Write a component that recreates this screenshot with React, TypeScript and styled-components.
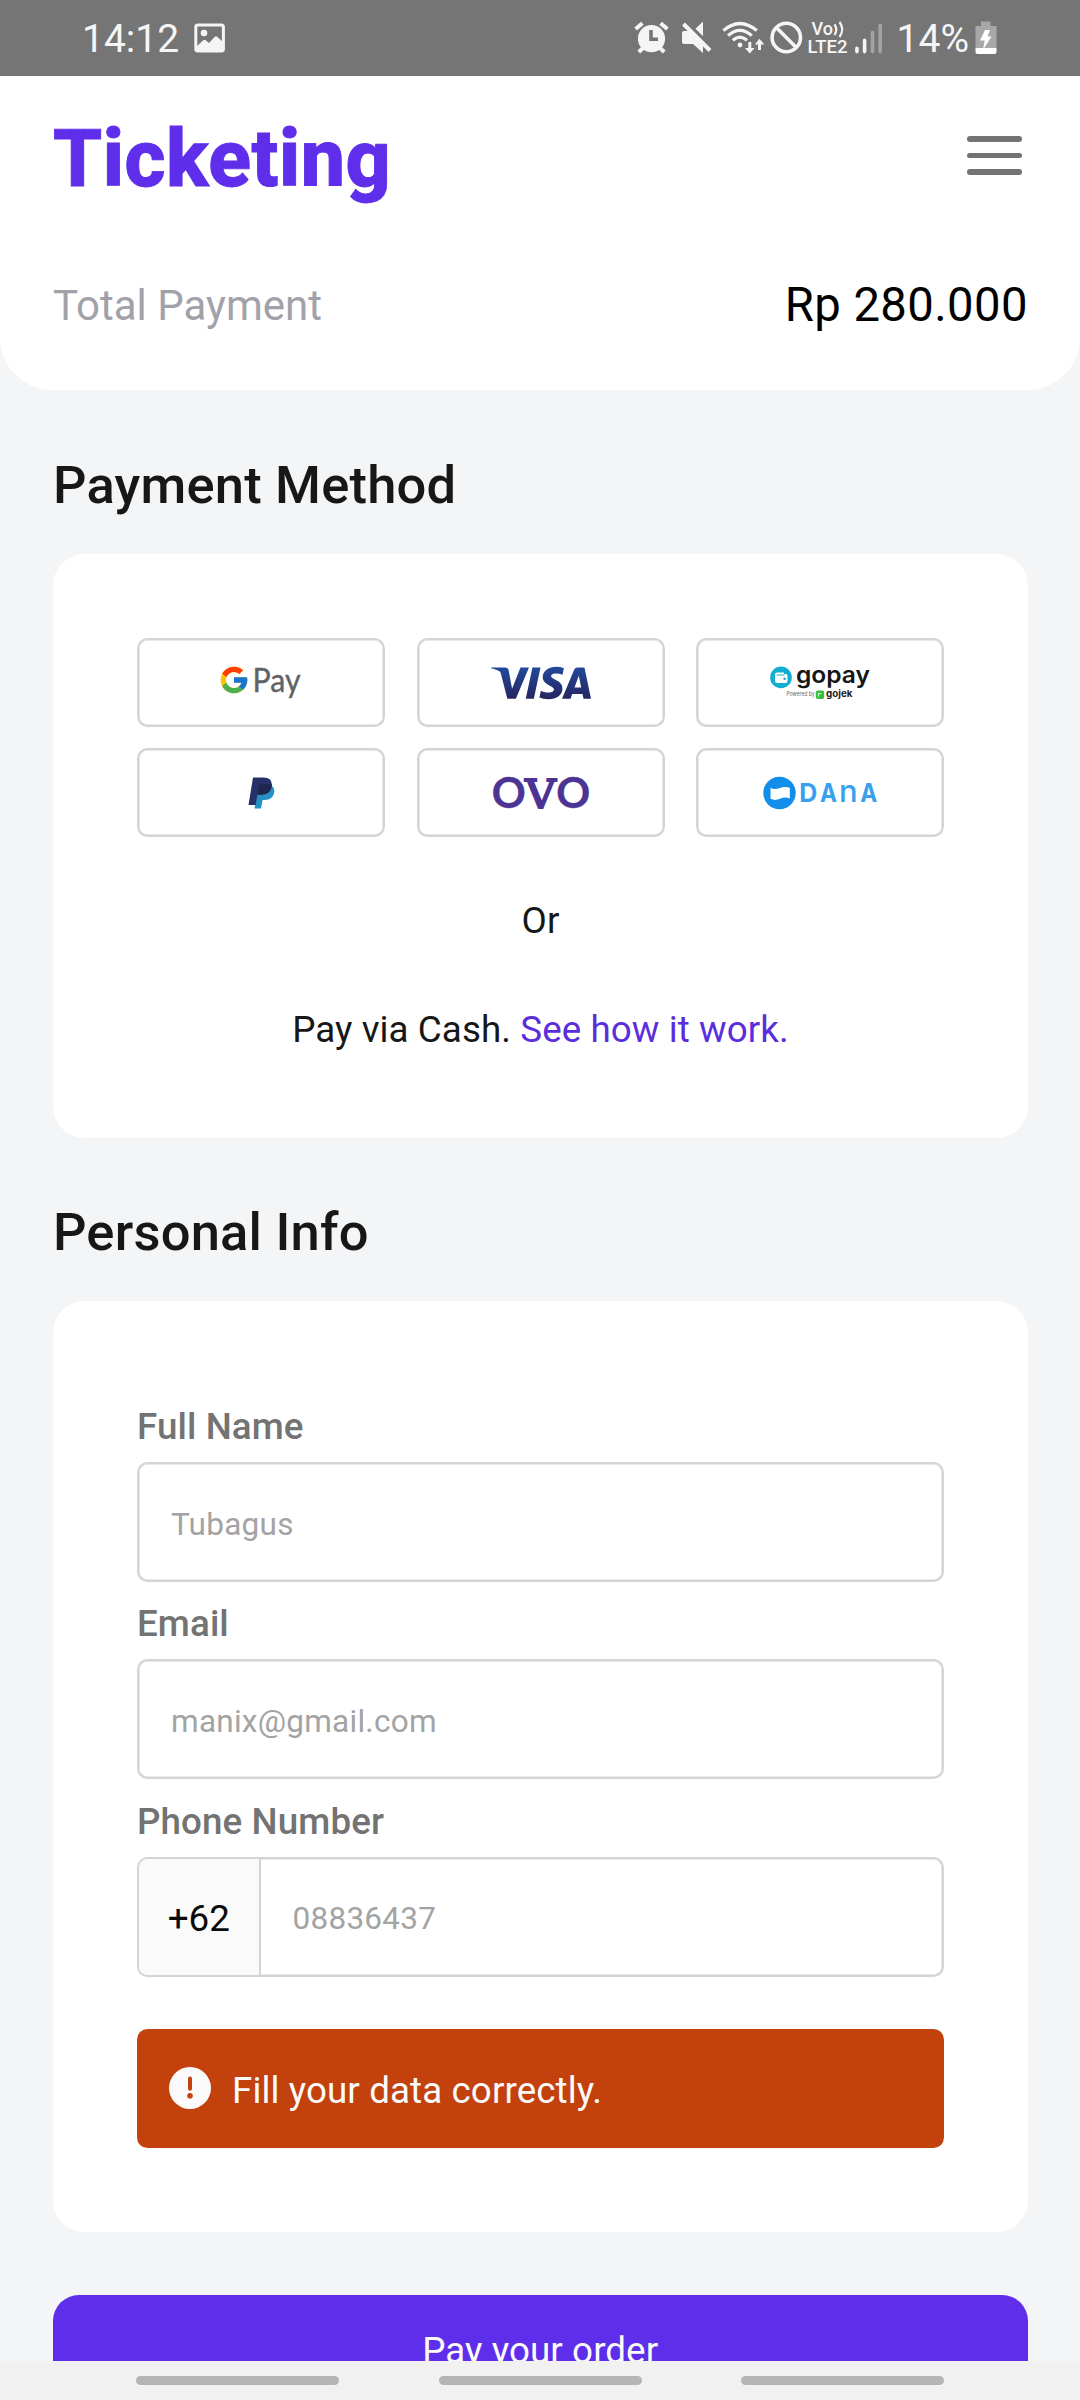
import React from "react";
import styled, { createGlobalStyle, css } from "styled-components";
import { FcGoogle } from "react-icons/fc";
import { SiVisa } from "react-icons/si";

const color = {
  primary: "#5f2eea",
  page: "#f4f5f7",
  ink: "#171717",
  label: "#737373",
  muted: "#a1a1aa",
  placeholder: "#a3a3a3",
  line: "#d4d4d4",
  alert: "#c2410c",
  status: "#f5f5f5",
};

const GlobalStyle = createGlobalStyle`
  * { box-sizing: border-box; }
  body { margin: 0; background: ${color.page}; }
  input, button { font-family: inherit; margin: 0; }
  svg { display: block; flex: none; overflow: visible; }
`;

const Phone = styled.div`
  width: 1080px;
  height: 2400px;
  display: flex;
  flex-direction: column;
  overflow: hidden;
  background: ${color.page};
  font-family: Roboto, "Noto Sans", sans-serif;
`;

/* ---------- status bar ---------- */

const StatusBar = styled.div`
  flex: none;
  height: 76px;
  display: flex;
  justify-content: space-between;
  padding: 20px 83px 20px 82px;
  background: #757575;
  color: ${color.status};
`;

const StatusGroup = styled.div`
  display: flex;
  height: 36px;
`;

const StatusText = styled.span<{ $gap: number; $before?: number }>`
  font-size: 39px;
  line-height: 39px;
  margin-left: ${(p) => p.$before ?? 0}px;
  margin-right: ${(p) => p.$gap}px;
  white-space: nowrap;
`;

const StatusIcon = styled.svg<{ $before?: number }>`
  margin-left: ${(p) => p.$before ?? 0}px;
  overflow: hidden;
`;

const Network = styled.div`
  width: 42px;
  margin: 0 6px 0 4px;
  text-align: center;
  font-weight: 500;
  white-space: nowrap;
`;

const NetworkTop = styled.div`
  display: flex;
  padding-left: 5px;
  font-size: 18px;
  line-height: 18px;
`;

const NetworkBottom = styled.div`
  font-size: 18.5px;
  line-height: 18px;
`;

function Status() {
  return (
    <StatusBar>
      <StatusGroup>
        <StatusText $gap={15}>14:12</StatusText>
        <StatusIcon width="32" height="36" viewBox="0 0 32 36">
          <rect x="1.8" y="5" width="27.6" height="26" rx="2" fill="none" stroke="#f5f5f5" strokeWidth="3" />
          <circle cx="10" cy="13" r="3.3" fill="#f5f5f5" />
          <path d="M2 27 L9 20.5 Q10.5 19 12 20.5 L15 23 L20.5 17 Q22 15.3 23.5 17 L30 23 V31 H2Z" fill="#f5f5f5" />
        </StatusIcon>
      </StatusGroup>
      <StatusGroup>
        <StatusIcon width="35" height="36" viewBox="0 0 35 36">
          <g stroke="#f5f5f5" strokeWidth="4" fill="none">
            <path d="M1.6 9 L8.4 3.2 M26.6 3.2 L33.4 9" />
            <path d="M4.8 32 L9 28 M26 28 L30.2 32" />
          </g>
          <circle cx="17.5" cy="18.7" r="13.6" fill="#f5f5f5" />
          <path d="M17 10 V19.3 H24" stroke="#757575" strokeWidth="3.6" fill="none" />
        </StatusIcon>
        <StatusIcon $before={12} width="32" height="36" viewBox="0 0 32 36">
          <path d="M3 11 H9.5 L22 23.5 V33 L12 24 H3 Q1 24 1 22 V13 Q1 11 3 11Z" fill="#f5f5f5" />
          <path d="M14.5 8.8 L22 1.5 V16.3Z" fill="#f5f5f5" />
          <path d="M2.5 4 L29 30.5" stroke="#f5f5f5" strokeWidth="4" />
        </StatusIcon>
        <StatusIcon $before={9} width="43" height="36" viewBox="0 0 43 36">
          <g stroke="#f5f5f5" strokeWidth="3.2" fill="none">
            <path d="M1.4 10.6 Q17.8 -3.6 34.8 10.6" />
            <path d="M6 15.6 Q17.8 5.2 29.8 15.6" />
            <path d="M10.8 20.2 Q17.8 14 25 20.2" />
            <path d="M27.8 22 V31 M37.5 30 V22" strokeWidth="3" />
          </g>
          <circle cx="18" cy="25" r="2.4" fill="#f5f5f5" />
          <path d="M23 28 H32.6 L27.8 33.5Z M32.8 24.4 H42.3 L37.5 18.8Z" fill="#f5f5f5" />
        </StatusIcon>
        <StatusIcon $before={5} width="33" height="36" viewBox="0 0 33 36">
          <circle cx="16.3" cy="17.5" r="14.2" fill="none" stroke="#f5f5f5" strokeWidth="3.6" />
          <path d="M6.3 7.5 L26.3 27.5" stroke="#f5f5f5" strokeWidth="3.6" />
        </StatusIcon>
        <Network>
          <NetworkTop>
            Vo
            <svg width="12" height="18" viewBox="0 0 12 18">
              <path d="M1.5 4.4 Q5 9.5 1.5 15 M6.5 2 Q12 9.5 6.5 17" fill="none" stroke="#f5f5f5" strokeWidth="2.2" />
            </svg>
          </NetworkTop>
          <NetworkBottom>LTE2</NetworkBottom>
        </Network>
        <StatusIcon width="28" height="36" viewBox="0 0 28 36">
          <g strokeWidth="3.6" strokeLinecap="round" stroke="#f5f5f5">
            <path d="M1.9 28.4 V31.6 M9.6 20.4 V31.6" />
            <path d="M17.5 12.5 V31.6 M25.2 5.4 V31.6" stroke="#a3a3a3" />
          </g>
        </StatusIcon>
        <StatusText $gap={6} $before={14}>14%</StatusText>
        <StatusIcon width="22" height="36" viewBox="0 0 22 36">
          <path d="M6 1.5 H15.5 V6 H21.5 V28 H0.5 V6 H6Z" fill="#a8a8a8" />
          <path d="M0.5 28 H21.5 V32 Q21.5 34 19.5 34 H2.5 Q0.5 34 0.5 32Z" fill="#fff" />
          <path d="M10 10 H15 L12.5 16.5 H16.5 L8 30 L9.7 20.5 H5Z" fill="#fff" />
        </StatusIcon>
      </StatusGroup>
    </StatusBar>
  );
}

/* ---------- header ---------- */

const Header = styled.header`
  flex: none;
  height: 314px;
  padding: 37px 52px 0 53px;
  background: #fff;
  border-radius: 0 0 52.5px 52.5px;
`;

const HeaderRow = styled.div`
  display: flex;
  justify-content: space-between;
  align-items: flex-start;
`;

const Brand = styled.h1`
  margin: 0;
  font-size: 78.75px;
  line-height: 92px;
  font-weight: 800;
  letter-spacing: 0.5px;
  -webkit-text-stroke: 0.9px ${color.primary};
  color: ${color.primary};
`;

const MenuButton = styled.div`
  display: grid;
  gap: 10.8px;
  margin: 23px 6px 0 0;
`;

const MenuLine = styled.span`
  width: 55px;
  height: 5.8px;
  border-radius: 3px;
  background: ${color.label};
`;

const TotalRow = styled.div`
  display: flex;
  justify-content: space-between;
  align-items: center;
  height: 56px;
  margin-top: 72px;
`;

const TotalLabel = styled.span`
  font-size: 42px;
  color: ${color.muted};
`;

const TotalValue = styled.span`
  font-size: 47.25px;
  letter-spacing: 0.4px;
  color: #000;
`;

/* ---------- content ---------- */

const Content = styled.main`
  flex: 1;
  min-height: 0;
  overflow: hidden;
  padding: 0 52.5px 0 53px;
`;

const SectionTitle = styled.h2`
  margin: 64px 0 38px;
  font-size: 52.5px;
  line-height: 62px;
  font-weight: 500;
  letter-spacing: 0.2px;
  color: ${color.ink};
`;

const Card = styled.section<{ $top: number }>`
  padding: ${(p) => p.$top}px 83.5px 84px 84px;
  border-radius: 31.5px;
  background: #fff;
  & + ${SectionTitle} {
    margin-top: 63px;
  }
`;

const Methods = styled.div`
  display: grid;
  grid-template-columns: repeat(3, 248px);
  gap: 21px 31.5px;
`;

const outlined = css`
  border: 2px solid ${color.line};
  box-shadow: inset 0 0 0 0.6px ${color.line};
  border-radius: 10.5px;
`;

const Method = styled.div`
  ${outlined}
  height: 89px;
  display: flex;
  align-items: center;
  justify-content: center;
`;

const VisaMark = styled.div`
  width: 100px;
  height: 32px;
  display: flex;
  align-items: center;
  justify-content: center;
  svg {
    fill: url(#visaFill);
  }
`;

const Or = styled.p`
  margin: 62px 0 0;
  font-size: 36.75px;
  line-height: 43px;
  letter-spacing: 0.08px;
  text-align: center;
  color: ${color.ink};
`;

const CashLine = styled(Or)`
  margin: 66px 0 3px;
`;

const CashLink = styled.span`
  color: #5b2edc;
`;

const Field = styled.label`
  display: block;
  margin-bottom: 20.4px;
`;

const FieldLabel = styled.span`
  display: block;
  margin-bottom: 14px;
  font-size: 36.75px;
  line-height: 43px;
  font-weight: 500;
  letter-spacing: 0.1px;
  color: ${color.label};
`;

const InputShell = styled.div`
  ${outlined}
  display: flex;
  height: 120px;
  overflow: hidden;
`;

const Prefix = styled.span`
  width: 121.5px;
  padding-top: 4px;
  display: flex;
  align-items: center;
  justify-content: center;
  background: #fafafa;
  border-right: 2px solid ${color.line};
  font-size: 36.75px;
  color: #0a0a0a;
`;

const Input = styled.input`
  flex: 1;
  min-width: 0;
  padding: 4px 32px 0;
  border: 0;
  outline: 0;
  background: transparent;
  font-size: 31.5px;
  letter-spacing: 0.26px;
  &::placeholder {
    color: ${color.placeholder};
  }
`;

const Alert = styled.div`
  display: flex;
  align-items: center;
  height: 119px;
  margin-top: 52px;
  padding: 0 32px;
  gap: 21px;
  border-radius: 10.5px;
  background: ${color.alert};
  color: #fafafa;
`;

const AlertText = styled.span`
  padding-top: 4px;
  font-size: 36.75px;
  letter-spacing: 0.1px;
`;

const PayButton = styled.button`
  display: block;
  width: 100%;
  height: 112px;
  margin-top: 63px;
  padding: 0;
  border: 0;
  border-radius: 26px;
  background: ${color.primary};
  color: #fafafa;
  font-size: 36.75px;
  line-height: 43px;
  letter-spacing: 0.08px;
`;

const NavBar = styled.nav`
  flex: none;
  height: 39px;
  display: flex;
  justify-content: space-between;
  padding: 15px 136px 0;
  background: #f1f1f1;
`;

const NavPill = styled.span`
  width: 203px;
  height: 9px;
  border-radius: 5px;
  background: #b5b5b5;
`;

/* ---------- payment marks ---------- */

const GooglePayMark = styled.div`
  display: flex;
  align-items: center;
  width: 80px;
  height: 32px;
`;

const GoogleGlyph = styled(FcGoogle)`
  margin: -5px 3px 0 -2.7px;
`;

const GooglePay = () => (
  <GooglePayMark>
    <GoogleGlyph size={32} />
    <svg width="48" height="32" viewBox="0 0 48 32">
      <text x="-0.5" y="25" fontFamily="Lato, sans-serif" fontSize="32" fill="#5f6368" stroke="#5f6368" strokeWidth="0.4" textLength="48" lengthAdjust="spacingAndGlyphs">
        Pay
      </text>
    </svg>
  </GooglePayMark>
);

const Visa = () => (
  <VisaMark>
    <svg width="0" height="0">
      <defs>
        <linearGradient id="visaFill" gradientUnits="userSpaceOnUse" x1="0" y1="8" x2="0" y2="16">
          <stop offset="0" stopColor="#224a9c" />
          <stop offset="1" stopColor="#252560" />
        </linearGradient>
      </defs>
    </svg>
    <SiVisa size={100} />
  </VisaMark>
);

const Gopay = () => (
  <svg width="100" height="32" viewBox="0 0 100 32">
    <circle cx="11" cy="10.4" r="10.8" fill="#12aecf" />
    <path d="M5 7.2 Q5 5.4 7 5.4 H14 V7 H16 Q17.5 7 17.5 9 V14 Q17.5 16 15.5 16 H7 Q5 16 5 14Z" fill="#fff" />
    <path d="M6.5 8 H14.5" stroke="#12aecf" strokeWidth="1" />
    <circle cx="14.6" cy="11.7" r="1.3" fill="#12aecf" />
    <text x="26" y="15.7" fontFamily="Inter, sans-serif" fontWeight="600" fontSize="24" fill="#161616" textLength="74" lengthAdjust="spacingAndGlyphs">
      gopay
    </text>
    <text x="16.5" y="29.4" fontFamily="Inter, sans-serif" fontSize="6" fill="#666" textLength="28" lengthAdjust="spacingAndGlyphs">
      Powered by
    </text>
    <rect x="45.8" y="23.4" width="8.4" height="8.6" rx="2" fill="#35c13c" />
    <path d="M48.5 29.5 V26.5 H51.5" stroke="#c4f0c6" strokeWidth="1.2" fill="none" />
    <text x="56" y="29.8" fontFamily="Inter, sans-serif" fontWeight="700" fontSize="9.6" fill="#222" textLength="26.5" lengthAdjust="spacingAndGlyphs">
      gojek
    </text>
  </svg>
);

const Paypal = () => (
  <svg width="27" height="32" viewBox="0 0 27 32">
    <path d="M10 8 H22.5 Q27.5 10.5 26 16.5 Q24.3 23 17 23 H14.6 L13 31.5 H6.5Z" fill="#2790c3" />
    <path d="M5 0.5 H15.5 Q24.6 0.8 23.8 8.6 Q22.8 17.6 13 17.8 H9.4 L7.6 28 H0.5Z" fill="#253166" />
    <path d="M11 8 Q11.2 7.2 12.2 7.2 H23.8 Q23.8 17.4 13.6 17.8 H9.4Z" fill="#1f264f" />
  </svg>
);

const Ovo = () => (
  <svg width="96" height="32" viewBox="0 0 96 32" fontFamily="Lato, sans-serif" fontWeight="700" fill="#4c3494" stroke="#4c3494">
    <text x="-1.2" y="30.8" fontSize="41.5" textLength="34" lengthAdjust="spacingAndGlyphs" strokeWidth="0.4">O</text>
    <text x="32.2" y="30.6" fontFamily="'DejaVu Serif', serif" fontWeight="400" fontSize="39.5" textLength="30.5" lengthAdjust="spacingAndGlyphs" strokeWidth="2">V</text>
    <text x="63.2" y="30.8" fontSize="41.5" textLength="34" lengthAdjust="spacingAndGlyphs" strokeWidth="0.4">O</text>
  </svg>
);

const Dana = () => (
  <svg width="114" height="32" viewBox="0 0 114 32">
    <circle cx="16.5" cy="16" r="16.2" fill="#118ee9" />
    <path d="M7.5 11 Q12 13.2 17 11 Q22 9 26.8 10.8 V21.5 Q22 19.6 17 21.8 Q12 24 7.5 21.8Z" fill="#fff" />
    <g fontFamily="Inter, sans-serif" fontWeight="700" fontSize="25" fill="#3a9fec">
      <text x="36.2" y="25" textLength="18" lengthAdjust="spacingAndGlyphs">D</text>
      <text x="57" y="25" textLength="17" lengthAdjust="spacingAndGlyphs">A</text>
      <text x="76" y="25" fontSize="31" fontWeight="500" textLength="18.6" lengthAdjust="spacingAndGlyphs">n</text>
      <text x="97.3" y="25" textLength="17" lengthAdjust="spacingAndGlyphs">A</text>
    </g>
  </svg>
);

const methods = [
  { id: "gpay", Mark: GooglePay },
  { id: "visa", Mark: Visa },
  { id: "gopay", Mark: Gopay },
  { id: "paypal", Mark: Paypal },
  { id: "ovo", Mark: Ovo },
  { id: "dana", Mark: Dana },
];

export default function App() {
  return (
    <Phone>
      <GlobalStyle />
      <Status />
      <Header>
        <HeaderRow>
          <Brand>Ticketing</Brand>
          <MenuButton>
            <MenuLine />
            <MenuLine />
            <MenuLine />
          </MenuButton>
        </HeaderRow>
        <TotalRow>
          <TotalLabel>Total Payment</TotalLabel>
          <TotalValue>Rp 280.000</TotalValue>
        </TotalRow>
      </Header>
      <Content>
        <SectionTitle>Payment Method</SectionTitle>
        <Card $top={84}>
          <Methods>
            {methods.map(({ id, Mark }) => (
              <Method key={id}>
                <Mark />
              </Method>
            ))}
          </Methods>
          <Or>Or</Or>
          <CashLine>
            Pay via Cash. <CashLink>See how it work.</CashLink>
          </CashLine>
        </Card>
        <SectionTitle>Personal Info</SectionTitle>
        <Card $top={104}>
          <Field>
            <FieldLabel>Full Name</FieldLabel>
            <InputShell>
              <Input placeholder="Tubagus" />
            </InputShell>
          </Field>
          <Field>
            <FieldLabel>Email</FieldLabel>
            <InputShell>
              <Input placeholder="manix@gmail.com" />
            </InputShell>
          </Field>
          <Field>
            <FieldLabel>Phone Number</FieldLabel>
            <InputShell>
              <Prefix>+62</Prefix>
              <Input placeholder="08836437" />
            </InputShell>
          </Field>
          <Alert>
            <svg width="42" height="42" viewBox="0 0 42 42">
              <circle cx="21" cy="21" r="21" fill="#fafafa" />
              <path d="M21 11.5 V21.8" stroke={color.alert} strokeWidth="4" strokeLinecap="round" />
              <circle cx="21" cy="28.8" r="2.8" fill={color.alert} />
            </svg>
            <AlertText>Fill your data correctly.</AlertText>
          </Alert>
        </Card>
        <PayButton>Pay your order</PayButton>
      </Content>
      <NavBar>
        <NavPill />
        <NavPill />
        <NavPill />
      </NavBar>
    </Phone>
  );
}
